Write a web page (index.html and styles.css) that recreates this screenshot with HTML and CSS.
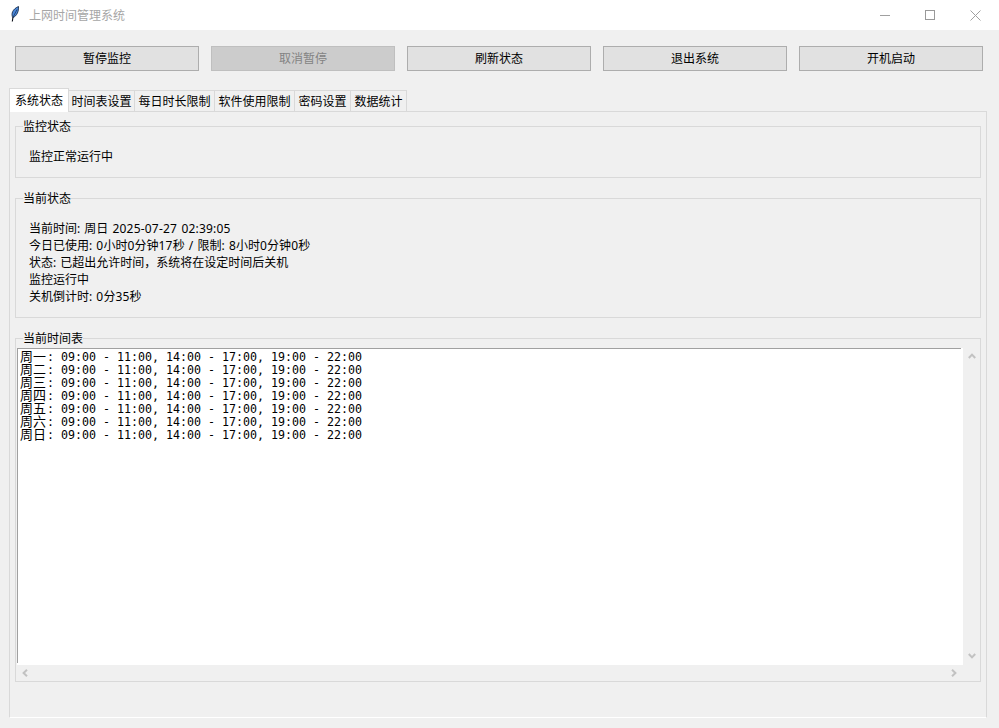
FILE: index.html
```html
<!DOCTYPE html>
<html lang="zh-CN">
<head>
<meta charset="utf-8">
<title>上网时间管理系统</title>
<link rel="stylesheet" href="styles.css">
</head>
<body>
<div class="window">
  <header class="titlebar">
    <svg class="feather" width="8" height="16" viewBox="0 0 8 16"><path d="M1.3 15.5 L2 11" fill="none" stroke="#0b0f18" stroke-width="1.1"/><path d="M1.8 11.6 C-.2 8 1.5 3 7.5 .5 C7.9 5 6 10 1.8 11.6 Z" fill="#4a86d8" stroke="#0d1e38" stroke-width=".8"/><path d="M2.2 11 L6 3.5" stroke="#0d1e38" stroke-width=".6" fill="none"/></svg>
    <span class="title">上网时间管理系统</span>
    <div class="controls">
      <svg width="10" height="10" viewBox="0 0 10 10"><path d="M0 5.5H10" stroke="#a0a0a0" fill="none"/></svg>
      <svg width="10" height="10" viewBox="0 0 10 10"><rect x=".5" y=".5" width="9" height="9" stroke="#999" fill="none"/></svg>
      <svg width="11" height="11" viewBox="0 0 11 11"><path d="M.5.5L10.5 10.5M10.5.5L.5 10.5" stroke="#a0a0a0" fill="none"/></svg>
    </div>
  </header>
  <div class="toolbar">
    <button class="btn">暂停监控</button>
    <button class="btn btn-off">取消暂停</button>
    <button class="btn">刷新状态</button>
    <button class="btn">退出系统</button>
    <button class="btn">开机启动</button>
  </div>
  <nav class="tabs">
    <div class="tab tab-on w60">系统状态</div>
    <div class="tab w66">时间表设置</div>
    <div class="tab w80">每日时长限制</div>
    <div class="tab w80">软件使用限制</div>
    <div class="tab w56">密码设置</div>
    <div class="tab w56">数据统计</div>
  </nav>
  <main class="pane">
    <fieldset class="group group-a">
      <legend>监控状态</legend>
      <div class="lines">监控正常运行中</div>
    </fieldset>
    <fieldset class="group group-b">
      <legend>当前状态</legend>
      <div class="lines">
        <div>当前时间: 周日 <span class="lat">2025-07-27 02:39:05</span></div>
        <div>今日已使用: <span class="lat">0</span>小时<span class="lat">0</span>分钟<span class="lat">17</span>秒 <span class="lat">/</span> 限制: <span class="lat">8</span>小时<span class="lat">0</span>分钟<span class="lat">0</span>秒</div>
        <div>状态: 已超出允许时间，系统将在设定时间后关机</div>
        <div>监控运行中</div>
        <div>关机倒计时: <span class="lat">0</span>分<span class="lat">35</span>秒</div>
      </div>
    </fieldset>
    <fieldset class="group group-c">
      <legend>当前时间表</legend>
      <div class="sched">
        <div class="textbox">
          <div class="row"><span class="cjk">周一</span>: 09:00 - 11:00, 14:00 - 17:00, 19:00 - 22:00</div>
          <div class="row"><span class="cjk">周二</span>: 09:00 - 11:00, 14:00 - 17:00, 19:00 - 22:00</div>
          <div class="row"><span class="cjk">周三</span>: 09:00 - 11:00, 14:00 - 17:00, 19:00 - 22:00</div>
          <div class="row"><span class="cjk">周四</span>: 09:00 - 11:00, 14:00 - 17:00, 19:00 - 22:00</div>
          <div class="row"><span class="cjk">周五</span>: 09:00 - 11:00, 14:00 - 17:00, 19:00 - 22:00</div>
          <div class="row"><span class="cjk">周六</span>: 09:00 - 11:00, 14:00 - 17:00, 19:00 - 22:00</div>
          <div class="row"><span class="cjk">周日</span>: 09:00 - 11:00, 14:00 - 17:00, 19:00 - 22:00</div>
        </div>
        <div class="vbar">
          <svg width="8" height="6" viewBox="0 0 8 6"><path d="M.8 5L4 1.6 7.2 5" fill="none" stroke="#c2c2c2" stroke-width="2"/></svg>
          <svg width="8" height="6" viewBox="0 0 8 6"><path d="M.8 1L4 4.4 7.2 1" fill="none" stroke="#c2c2c2" stroke-width="2"/></svg>
        </div>
        <div class="hbar">
          <svg width="6" height="8" viewBox="0 0 6 8"><path d="M5 .8L1.6 4 5 7.2" fill="none" stroke="#c2c2c2" stroke-width="2"/></svg>
          <svg width="6" height="8" viewBox="0 0 6 8"><path d="M1 .8L4.4 4 1 7.2" fill="none" stroke="#c2c2c2" stroke-width="2"/></svg>
        </div>
      </div>
    </fieldset>
  </main>
</div>
</body>
</html>
```
FILE: styles.css
```css
* { box-sizing: border-box; }
html, body { margin: 0; padding: 0; height: 100%; overflow: hidden; }
body {
  background: #f0f0f0;
  color: #000;
  font: 12px/17px "Noto Sans", "Noto Sans CJK SC", sans-serif;
}
.window { display: flex; flex-direction: column; height: 728px; }

.titlebar {
  display: flex;
  align-items: center;
  flex: none;
  height: 30px;
  padding-left: 11px;
  background: #fff;
}
.feather { flex: none; margin-top: -2px; }
.title { margin-left: 10px; color: #a6a6a6; }
.controls {
  display: flex;
  align-items: center;
  margin-left: auto;
  gap: 35px;
  padding-right: 18px;
}

.toolbar {
  display: grid;
  grid-template-columns: repeat(5, 184px);
  gap: 12px;
  flex: none;
  padding: 16px 15px 17px;
}
.btn {
  height: 25px;
  padding: 0 0 1px;
  border: 1px solid #adadad;
  border-radius: 0;
  background: #e1e1e1;
  color: #000;
  font: inherit;
}
.btn-off { background: #cccccc; border-color: #bfbfbf; color: #838383; }

.tabs {
  display: flex;
  align-items: flex-end;
  flex: none;
  height: 23px;
  padding-left: 9px;
}
.tab {
  height: 21px;
  border: 1px solid #d9d9d9;
  border-bottom: 0;
  border-left: 0;
  background: #f0f0f0;
  line-height: 21px;
  text-align: center;
  white-space: nowrap;
}
.tab-on {
  height: 24px;
  margin-bottom: -1px;
  border-left: 1px solid #d9d9d9;
  background: #fff;
  position: relative;
  line-height: 23px;
}
.w60 { width: 60px; }
.w66 { width: 66px; }
.w80 { width: 80px; }
.w56 { width: 56px; }

.pane {
  flex: none;
  width: 978px;
  height: 607px;
  margin-left: 9px;
  padding: 7px 5px 0;
  border: 1px solid #d9d9d9;
  border-bottom-color: #fff;
}
.group {
  min-width: 0;
  margin: 0 0 13px;
  border: 1px solid #d9d9d9;
}
.group legend {
  margin-left: -6px;
  padding: 2px 0 0;
  line-height: 12px;
}
.lines { word-spacing: 1px; }
.group-a { padding: 15px 13px 12px; }
.group-b { padding: 15px 13px 12px; }
.group-c { margin-bottom: 0; padding: 3px 0 0 1px; }
.group-c legend { margin-left: 6px; }
.lat { letter-spacing: .2px; }
.sched {
  display: grid;
  grid-template-columns: 946px 17px;
  grid-template-rows: 317px 16px;
}
.textbox {
  padding: 1px 0 0 3px;
  background-color: #fff;
  background-image: linear-gradient(#a0a0a0, #a0a0a0), linear-gradient(#a0a0a0, #a0a0a0);
  background-repeat: no-repeat;
  background-size: calc(100% - 2px) 1px, 1px calc(100% - 2px);
  font: 11.63px/13px "DejaVu Sans Mono", "Noto Sans CJK SC", monospace;
}
.row { height: 13px; white-space: pre; }
.cjk { margin-right: 1px; font: 13px/13px "Noto Sans CJK SC", sans-serif; }
.vbar {
  display: flex;
  flex-direction: column;
  align-items: center;
  justify-content: space-between;
  padding: 5px 0 6px;
}
.hbar {
  display: flex;
  grid-column: 1;
  align-items: center;
  justify-content: space-between;
  padding: 0 6px 0 5px;
}
```
